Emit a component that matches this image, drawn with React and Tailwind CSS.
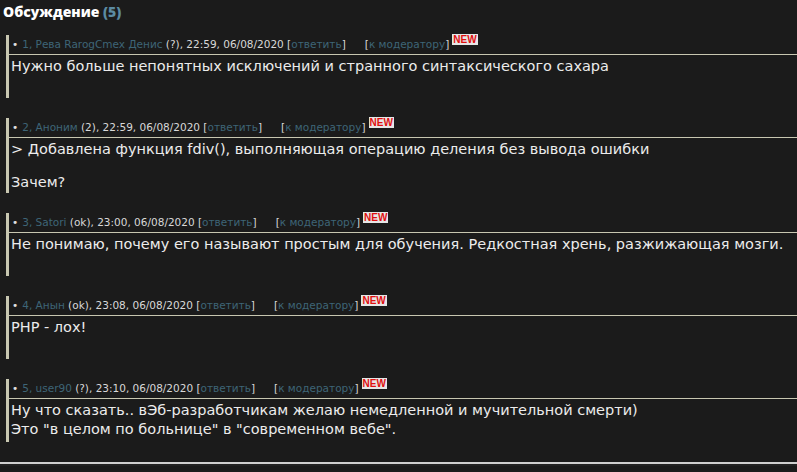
import React from "react";

const COMMENTS = [
  {
    n: 1,
    author: "Рева RarogCmex Денис",
    score: "?",
    time: "22:59, 06/08/2020",
    body: [["Нужно больше непонятных исключений и странного синтаксического сахара"]],
  },
  {
    n: 2,
    author: "Аноним",
    score: "2",
    time: "22:59, 06/08/2020",
    body: [["> Добавлена функция fdiv(), выполняющая операцию деления без вывода ошибки"], ["Зачем?"]],
  },
  {
    n: 3,
    author: "Satori",
    score: "ok",
    time: "23:00, 06/08/2020",
    body: [["Не понимаю, почему его называют простым для обучения. Редкостная хрень, разжижающая мозги."]],
  },
  {
    n: 4,
    author: "Анын",
    score: "ok",
    time: "23:08, 06/08/2020",
    body: [["PHP - лох!"]],
  },
  {
    n: 5,
    author: "user90",
    score: "?",
    time: "23:10, 06/08/2020",
    body: [["Ну что сказать.. вЭб-разработчикам желаю немедленной и мучительной смерти)", "Это \"в целом по больнице\" в \"современном вебе\"."]],
  },
];

const link = "text-[#3e6577]";

function Comment({ c }) {
  return (
    <div className="ml-[6px] mb-5 min-h-[63px] border-l-[3px] border-[#c8c7b1]">
      <div className="h-[20px] border-b border-[#c8c7b1] pl-[3px] font-['DejaVu_Sans',sans-serif] text-[10.5px] leading-[19px] text-[#d8d8d8] whitespace-nowrap">
        <span className="mr-[4px] text-[#e0e0e0]">•</span>
        <span className={link}>{c.n}, {c.author}</span> ({c.score}), {c.time} [<span className={link}>ответить</span>]
        <span className="inline-block w-[19px]" />[<span className={link}>к модератору</span>]
        <span className="relative -top-[5px] ml-[3px] bg-[#e6e6e6] px-[1px] font-['Liberation_Sans',sans-serif] text-[10px] font-bold leading-[10px] text-[#e01010]">NEW</span>
      </div>
      <div className="pl-[2px] pt-[2px] pb-[1px] font-['DejaVu_Sans',sans-serif] text-[14.5px] leading-[19px] text-[#ececec] whitespace-nowrap">
        {c.body.map((para, i) => (
          <div key={i} className={i > 0 ? "mt-[14px]" : ""}>
            {para.map((line, j) => (
              <div key={j}>{line}</div>
            ))}
          </div>
        ))}
      </div>
    </div>
  );
}

export default function App() {
  return (
    <div className="min-h-[472px] w-[797px] bg-[#1b1b1b] font-['Open_Sans',sans-serif]">
      <div className="px-[3px] pt-[2px] pb-[13px] font-['Open_Sans',sans-serif] text-[14px] font-extrabold leading-[20px] text-white">
        Обсуждение <span className="text-[#5b8ba2]">(5)</span>
      </div>
      {COMMENTS.map((c) => (
        <Comment key={c.n} c={c} />
      ))}
      <div className="mt-[9px] h-[4px] border-t-2 border-[#d0d0d0] bg-[#222]" />
    </div>
  );
}
